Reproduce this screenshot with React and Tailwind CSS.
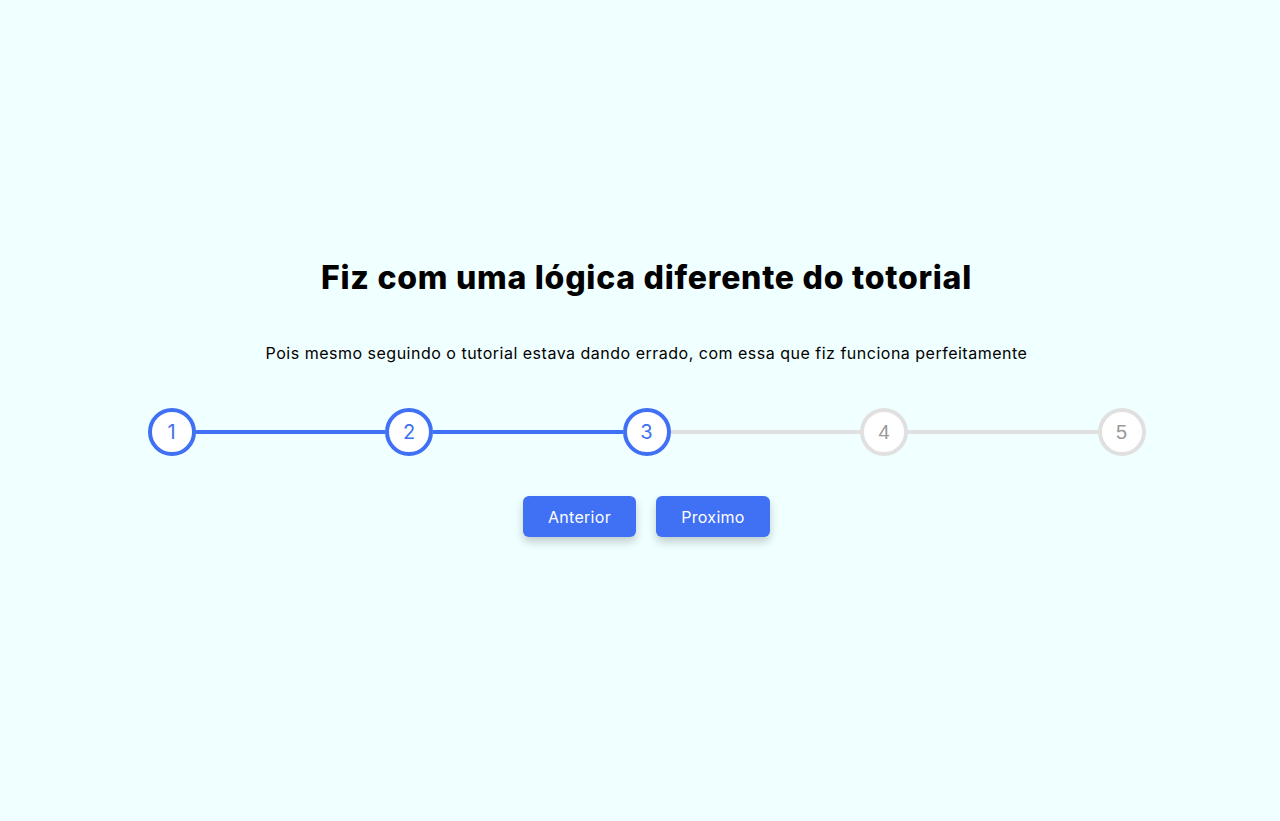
import React, { useState } from "react";

const STEPS = [1, 2, 3, 4, 5];

export default function App() {
  const [current, setCurrent] = useState(3);

  return (
    <div
      className="min-h-screen w-full bg-[#f0ffff] pt-[258px] pl-[13px]"
      style={{ fontFamily: "Inter, 'Noto Sans', sans-serif" }}
    >
      <div className="flex flex-col items-center">
        <h1 className="text-[32px] leading-[40px] font-extrabold text-black tracking-[0.75px]">
          Fiz com uma lógica diferente do totorial
        </h1>
        <p className="mt-[43px] text-[16px] leading-[24px] text-black tracking-[0.5px]">
          Pois mesmo seguindo o tutorial estava dando errado, com essa que fiz funciona perfeitamente
        </p>

        <div className="mt-[43px] flex w-[998px] items-center">
          {STEPS.map((n, i) => {
            const active = n <= current;
            const lineActive = n < current;
            return (
              <React.Fragment key={n}>
                <div
                  className={
                    active
                      ? "flex h-[48px] w-[48px] shrink-0 items-center justify-center rounded-full border-[4px] border-[#4070f4] bg-white text-[20px] text-[#4070f4]"
                      : "flex h-[48px] w-[48px] shrink-0 items-center justify-center rounded-full border-[4px] border-[#e0e0e0] bg-white text-[20px] text-[#999999]"
                  }
                  style={active ? undefined : { fontFamily: "'Liberation Sans', Arial, sans-serif" }}
                >
                  {n}
                </div>
                {i < STEPS.length - 1 && (
                  <div
                    className={
                      lineActive
                        ? "h-[4px] flex-1 bg-[#4070f4]"
                        : "h-[4px] flex-1 bg-[#e0e0e0]"
                    }
                  />
                )}
              </React.Fragment>
            );
          })}
        </div>

        <div className="mt-[40px] flex gap-[20px]">
          <button
            onClick={() => setCurrent((c) => Math.max(1, c - 1))}
            className="h-[41px] w-[113px] rounded-[6px] bg-[#4070f4] text-[16px] font-normal tracking-[0.3px] text-white shadow-[0_5px_10px_rgba(0,0,0,0.2)]"
          >
            Anterior
          </button>
          <button
            onClick={() => setCurrent((c) => Math.min(5, c + 1))}
            className="h-[41px] w-[114px] rounded-[6px] bg-[#4070f4] text-[16px] font-normal tracking-[0.3px] text-white shadow-[0_5px_10px_rgba(0,0,0,0.2)]"
          >
            Proximo
          </button>
        </div>
      </div>
    </div>
  );
}
